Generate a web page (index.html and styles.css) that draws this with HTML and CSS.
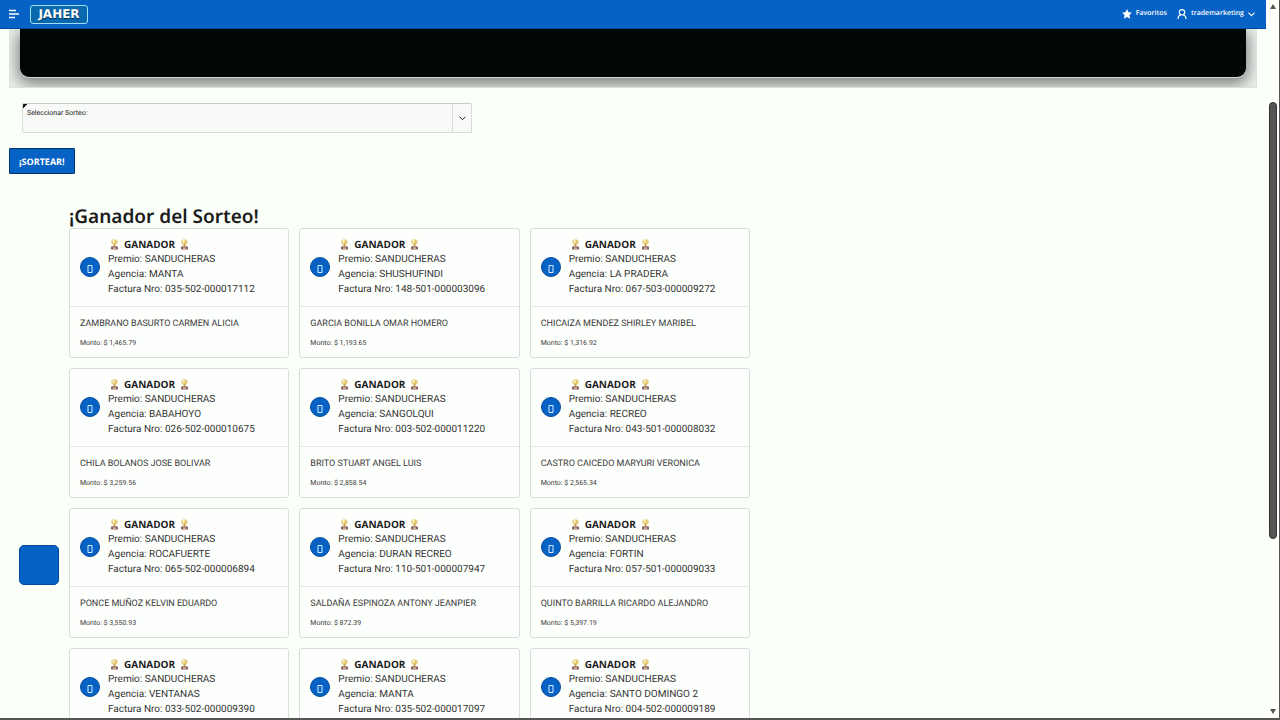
FILE: index.html
```html
<!DOCTYPE html>
<html lang="es">
<head>
<meta charset="utf-8">
<meta name="viewport" content="width=device-width, initial-scale=1">
<title>Sorteo JAHER</title>
<link rel="stylesheet" href="styles.css">
</head>
<body>
<svg class="defs" aria-hidden="true">
  <symbol id="trophy" viewBox="0 0 9 11">
    <path d="M1 1.500h7v2L6.500 5.500h-4L1 3.500z" fill="#ead9a0"/>
    <path d="M2.500 .5h4v3.500L5.500 6h-2l-1-2z" fill="#e0c468"/>
    <path d="M3 1h1.500v3H3z" fill="#fff3bd"/>
    <path d="M3.800 5.500h1.400v2H3.800z" fill="#b98a3c"/>
    <path d="M2 7h5l1 1.200H1z" fill="#b5847c"/>
    <path d="M1 8h7v2.500H1z" fill="#8a6264"/>
    <path d="M3 8.500h3v1.300H3z" fill="#d8c79a"/>
  </symbol>
</svg>
<div class="window">
  <div class="page">
    <header class="topbar">
      <button class="icon-button" type="button" aria-label="Menú">
        <svg width="12" height="10" viewBox="0 0 12 10" fill="none" stroke="#fff" stroke-width="1.300"><path d="M1 1.500h7M1 5h10M1 8.500h6"/></svg>
      </button>
      <a class="logo" href="#">JAHER</a>
      <nav class="topbar-nav">
        <a class="nav-link" href="#">
          <svg width="10" height="10" viewBox="0 0 10 10" fill="#fff"><path d="M5 0l1.500 3.300 3.500.4-2.600 2.400.7 3.600L5 7.900 1.900 9.700l.7-3.600L0 3.700l3.500-.4z"/></svg>
          Favoritos
        </a>
        <button class="nav-link" type="button">
          <svg width="10" height="10" viewBox="0 0 10 10" fill="none" stroke="#fff" stroke-width="1.100"><circle cx="5" cy="3.300" r="2.700"/><path d="M1 10c0-2.500 1.300-3.700 2.800-4.200M9 10c0-2.500-1.300-3.700-2.800-4.200"/></svg>
          trademarketing
          <svg class="caret" width="7" height="5" viewBox="0 0 7 5" fill="none" stroke="#fff" stroke-width="1.100"><path d="M.5 .7l3 3 3-3"/></svg>
        </button>
      </nav>
    </header>
    <main>
      <section class="stage"><div class="screen"></div></section>
      <form class="draw-form">
        <div class="field">
          <div class="field-main">
            <label for="sorteo">Seleccionar Sorteo:</label>
            <select id="sorteo"><option></option></select>
          </div>
          <span class="field-arrow"><svg width="7" height="5" viewBox="0 0 7 5" fill="none" stroke="#222"><path d="M.5 .7l3 3 3-3"/></svg></span>
        </div>
        <button class="draw-button" type="button">¡SORTEAR!</button>
      </form>
      <section class="results">
        <button class="side-button" type="button" aria-label="Acción"></button>
        <div class="winners">
          <h1>¡Ganador del Sorteo!</h1>
          <div class="cards" id="cards"></div>
        </div>
      </section>
    </main>
  </div>
  <div class="scrollbar" aria-hidden="true">
    <svg width="6" height="5" viewBox="0 0 6 5"><path d="M3 0l3 5H0z" fill="#555"/></svg>
    <div class="track"><div class="thumb"></div></div>
    <svg width="6" height="5" viewBox="0 0 6 5"><path d="M0 0h6L3 5z" fill="#555"/></svg>
  </div>
</div>
<script src="app.js"></script>
</body>
</html>
```
FILE: styles.css
```css
* { box-sizing: border-box; }

body {
  margin: 0;
  background: #fafffa;
  color: #1c1c1c;
  font-family: Roboto, "Open Sans", sans-serif;
  font-size: 10px;
  text-rendering: geometricPrecision;
}

button, select {
  font-family: inherit;
  text-rendering: inherit;
}

.defs { position: absolute; width: 0; height: 0; }

.window {
  display: flex;
  height: 100vh;
  overflow: hidden;
  border-right: 1px solid #555;
  border-bottom: 2px solid #555;
}

.page {
  flex: 1;
  min-width: 0;
  overflow: hidden;
}

.topbar {
  display: flex;
  align-items: center;
  height: 29px;
  padding: 0 11px 0 8px;
  background: #0662c4;
  border-bottom: 1px solid #034a9c;
}

.icon-button {
  display: flex;
  padding: 0;
  border: 0;
  background: none;
}

.logo {
  display: flex;
  align-items: center;
  justify-content: center;
  width: 58px;
  height: 19px;
  margin-left: 10px;
  border: 1px solid #9fe0f4;
  border-radius: 3px;
  background: #0a68ac;
  color: #fff;
  font-family: "DejaVu Sans", sans-serif;
  font-size: 12px;
  font-weight: 700;
  line-height: 16px;
  text-decoration: none;
  text-shadow: 0 1px 1px #02304f;
}

.topbar-nav {
  display: flex;
  gap: 10px;
  margin-left: auto;
}

.nav-link {
  display: flex;
  align-items: center;
  gap: 4px;
  padding: 0;
  border: 0;
  background: none;
  color: #fff;
  font-family: "Open Sans", sans-serif;
  font-size: 7px;
  font-weight: 600;
  line-height: 14px;
  text-decoration: none;
}

.stage {
  height: 59px;
  margin: 0 9px;
  padding: 0 10px 10px;
  overflow: hidden;
  border: 1px solid #dde0dc;
  border-top: 0;
  background: #eef1ed;
}

.screen {
  height: 48px;
  border-radius: 0 0 9px 9px;
  background: #020604;
  box-shadow: 0 1px 0 #d2d5d1, 0 5px 16px 2px #777b77;
}

.draw-form { padding: 15px 9px 0; }

.field {
  display: flex;
  width: 100%;
  max-width: 450px;
  height: 30px;
  margin-left: 13px;
  border: 1px solid #d8dbd7;
  border-top-color: #c9ccc8;
  border-radius: 2px;
  background: linear-gradient(135deg, #111 3px, #f7faf6 3px);
}

.field-main {
  display: flex;
  flex: 1;
  flex-direction: column;
  padding: 4px 4px 0;
}

.field label {
  font-size: 7px;
  line-height: 10px;
}

.field select {
  height: 14px;
  padding: 0;
  border: 0;
  appearance: none;
  background: none;
  font-size: 10px;
}

.field-arrow {
  display: flex;
  align-items: center;
  justify-content: center;
  width: 19px;
  border-left: 1px solid #d8dbd7;
}

.draw-button {
  height: 26px;
  margin-top: 15px;
  padding: 0 9px;
  border: 1px solid #04336e;
  border-radius: 1px;
  background: #0662c4;
  color: #fff;
  font-family: "Open Sans", sans-serif;
  font-size: 9px;
  font-weight: 700;
}

.results {
  display: flex;
  gap: 10px;
  padding: 30px 19px 0;
}

.side-button {
  flex: none;
  width: 40px;
  height: 40px;
  margin-top: 341px;
  padding: 0;
  border: 1px solid #04499a;
  border-radius: 5px;
  background: #0662c4;
}

.winners {
  flex: 1;
  max-width: 681px;
}

h1 {
  margin: 0;
  font-family: "Noto Sans", sans-serif;
  font-size: 19px;
  font-weight: 600;
  line-height: 24px;
}

.cards {
  display: grid;
  grid-template-columns: repeat(3, minmax(0, 1fr));
  gap: 10px;
}

.card {
  border: 1px solid #dadddb;
  border-radius: 3px;
  background: #fdfffc;
}

.card-head {
  display: flex;
  align-items: center;
  gap: 8px;
  padding: 8px 10px 9px;
  border-bottom: 1px solid #e3e6e2;
  color: #333;
  line-height: 15px;
}

.badge {
  display: flex;
  align-items: center;
  justify-content: center;
  flex: none;
  width: 20px;
  height: 20px;
  border: 1px solid #044a9b;
  border-radius: 50%;
  background: #0662c4;
}

.card h2 {
  display: flex;
  align-items: center;
  gap: 5px;
  margin: 0;
  padding-left: 2px;
  color: #1c1c1c;
  font-family: "Open Sans", sans-serif;
  font-size: 10px;
  font-weight: 700;
  line-height: 15px;
}

.card p { margin: 0; }

.card-body {
  padding: 10px 10px 7px;
  color: #3a3a3a;
  line-height: 14px;
}

.card-body .name { font-size: 9px; }

.card-body .amount {
  margin-top: 5px;
  font-size: 7px;
}

.scrollbar {
  display: flex;
  flex: none;
  flex-direction: column;
  align-items: center;
  width: 13px;
  padding: 4px 0;
  background: #fdfffb;
}

.track {
  flex: 1;
  width: 8px;
  padding-top: 93px;
}

.thumb {
  height: 72%;
  border: 1px solid #333;
  border-radius: 4px;
  background: #555;
}
```
FILE: app.js
```js
const winners = [
  ["MANTA", "035-502-000017112", "ZAMBRANO BASURTO CARMEN ALICIA", "1,465.79"],
  ["SHUSHUFINDI", "148-501-000003096", "GARCIA BONILLA OMAR HOMERO", "1,193.65"],
  ["LA PRADERA", "067-503-000009272", "CHICAIZA MENDEZ SHIRLEY MARIBEL", "1,316.92"],
  ["BABAHOYO", "026-502-000010675", "CHILA BOLANOS JOSE BOLIVAR", "3,259.56"],
  ["SANGOLQUI", "003-502-000011220", "BRITO STUART ANGEL LUIS", "2,858.54"],
  ["RECREO", "043-501-000008032", "CASTRO CAICEDO MARYURI VERONICA", "2,565.34"],
  ["ROCAFUERTE", "065-502-000006894", "PONCE MUÑOZ KELVIN EDUARDO", "3,550.93"],
  ["DURAN RECREO", "110-501-000007947", "SALDAÑA ESPINOZA ANTONY JEANPIER", "872.39"],
  ["FORTIN", "057-501-000009033", "QUINTO BARRILLA RICARDO ALEJANDRO", "5,397.19"],
  ["VENTANAS", "033-502-000009390", "", ""],
  ["MANTA", "035-502-000017097", "", ""],
  ["SANTO DOMINGO 2", "004-502-000009189", "", ""]
];

const trophy = '<svg width="9" height="11" aria-hidden="true"><use href="#trophy"/></svg>';

document.getElementById("cards").innerHTML = winners.map(([agency, invoice, name, amount]) => `
  <article class="card">
    <div class="card-head">
      <span class="badge"><svg width="6" height="14" viewBox="0 0 6 14" fill="none" stroke="#d9efff"><path d="M1 5.500h4v7H1z"/></svg></span>
      <div>
        <h2>${trophy}GANADOR${trophy}</h2>
        <p>Premio: SANDUCHERAS</p>
        <p>Agencia: ${agency}</p>
        <p>Factura Nro: ${invoice}</p>
      </div>
    </div>
    ${name ? `<div class="card-body"><p class="name">${name}</p><p class="amount">Monto: $ ${amount}</p></div>` : ""}
  </article>`).join("");
```
